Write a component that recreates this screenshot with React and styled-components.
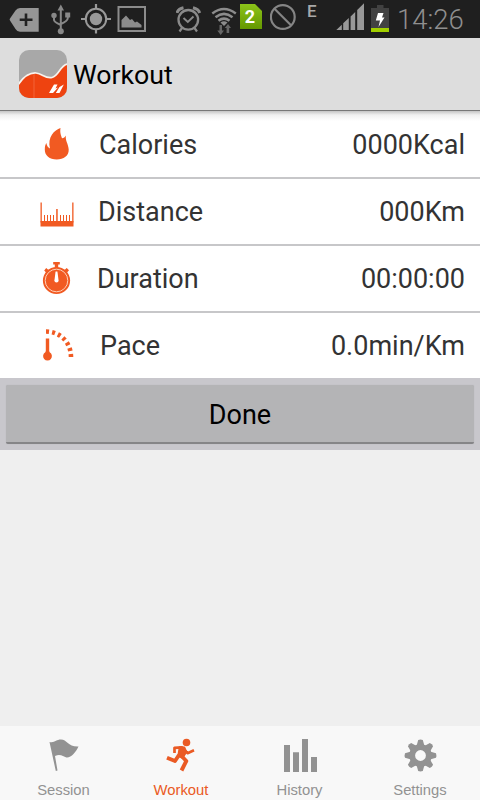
import React from 'react';
import styled, { createGlobalStyle } from 'styled-components';

const StatusBar = () => {
    return (
        <Status>
            <StatusIcon $w={30} $gap={9} viewBox="9 0 30 38">
                <path d="M20 8H38.7V31.7H20Q17 31.7 15.500 29L10 20.500Q9.200 19.500 10 18.500L15.500 10.500Q17 8 20 8Z" fill="#969696" />
                <path d="M26 13.500V26M19.700 19.700H32.500" stroke="#222" strokeWidth="2.600" />
            </StatusIcon>
            <StatusIcon $w={20} $gap={12} viewBox="51 0 20 38">
                <g fill="none" stroke="#888" strokeWidth="2">
                    <path d="M60.800 8V32M54 16V20Q54 22 60.800 25M67.800 15V18Q67.800 21 60.800 24" />
                </g>
                <g fill="#888">
                    <path d="M60.800 4.500L64 10.500H57.500Z" />
                    <circle cx="54" cy="15.500" r="2.700" />
                    <rect x="65.200" y="12.500" width="5" height="5" />
                    <circle cx="60.800" cy="31.300" r="3" />
                </g>
            </StatusIcon>
            <StatusIcon $w={30} $gap={10} viewBox="81 0 30 38">
                <circle cx="96" cy="19" r="10.200" fill="none" stroke="#999" strokeWidth="2" />
                <circle cx="96" cy="19" r="6.200" fill="#999" />
                <path d="M96 4V9M96 29V33.500M81 19H86M106 19H111" stroke="#999" strokeWidth="2.200" />
            </StatusIcon>
            <StatusIcon $w={30} $gap={6} viewBox="117 0 30 38">
                <rect x="118.500" y="7" width="26.500" height="24" fill="none" stroke="#8c8c8c" strokeWidth="2" />
                <path d="M121.500 27.500V20L126 15.500L130 20L132 19L135 22.500L137 21.500L141.500 25V27.500Z" fill="#8c8c8c" />
            </StatusIcon>
            <StatusIcon $w={26} $gap={29} viewBox="176 0 26 38">
                <g fill="none" stroke="#8a8a8a">
                    <circle cx="188.300" cy="19.800" r="9.800" strokeWidth="2.300" />
                    <path d="M183.500 18L187.800 22L193.500 16.500" strokeWidth="1.900" />
                    <path d="M177 13Q178 9 183.500 7.800M193 7.800Q198.500 9 199.700 13" strokeWidth="3" />
                    <path d="M182 28L179.500 31.500M194.500 28L197 31.500" strokeWidth="2.200" />
                </g>
            </StatusIcon>
            <StatusIcon $w={27} $gap={9} viewBox="211 0 27 38">
                <g fill="none" stroke="#8c8c8c" strokeWidth="2.500">
                    <path d="M212.300 13.500Q224 4.500 235.800 13.500" />
                    <path d="M215.500 17.200Q224 10.500 232.500 17.200" />
                    <path d="M218.500 20.800Q224 16.500 229.500 20.800" />
                </g>
                <path d="M220.500 22.500Q224 20 227.500 22.500L224 26Z" fill="#8c8c8c" />
                <g fill="#666">
                    <path d="M219.500 25H222V30.500H224L220.700 35L217.300 30.500H219.500Z" />
                    <path d="M226.600 33H229.200V28H231L228 24L224.800 28H226.600Z" />
                </g>
            </StatusIcon>
            <SimCard>2</SimCard>
            <StatusIcon $w={27} $gap={8} viewBox="270 0 27 38">
                <circle cx="282.800" cy="17" r="11.900" fill="none" stroke="#858585" strokeWidth="2.200" />
                <path d="M274.500 8.700L291 25.300" stroke="#858585" strokeWidth="2.200" />
            </StatusIcon>
            <NetworkType>E</NetworkType>
            <StatusIcon $w={28} $gap={19} viewBox="336 0 28 38">
                <path
                    d="M336.300 30L341.800 24.800V30ZM343.200 30V23.300L348.800 18V30ZM350.600 30V16.500L355.200 12V30ZM357.200 30V10L364 3.300V30Z"
                    fill="#989898"
                />
            </StatusIcon>
            <StatusIcon $w={18} $gap={7} viewBox="371 0 18 38">
                <path d="M377 5H383.500V8H389V28.500H371V8H377Z" fill="#424242" />
                <rect x="371" y="28" width="18" height="4" fill="#a2cf00" />
                <path d="M378 13L383.500 13L382 17.500L384.500 17.500L378.500 27L380 20.500L375.800 20.500Z" fill="#fff" />
            </StatusIcon>
            <Clock>14:26</Clock>
        </Status>
    )
};

const AppLogo = () => {
    return (
        <Logo viewBox="0 0 48 48">
            <clipPath id="tile">
                <rect width="48" height="48" rx="10" />
            </clipPath>
            <g clipPath="url(#tile)">
                <rect width="48" height="48" fill="#a8a8a8" />
                <path d="M-1 35C5 26 10 22.500 17 23C23.500 23.500 26 29 33 27.500C40 26 41 15 49 14V49H-1Z" fill="#ee4310" stroke="#f8f3ee" strokeWidth="1.700" />
                <path d="M15 24V48" stroke="#f36d45" strokeWidth=".8" />
                <path d="M35 34.500H38.500L36.500 38.500L39 37.500L34 43H30ZM40.500 37L44.800 34.500L40.500 43H36.800Z" fill="#fff" />
            </g>
        </Logo>
    )
};

const FlameIcon = () => {
    return (
        <StatIcon viewBox="0 0 36 36">
            <path
                d="M22.500 1C21.700 6 23.200 8.500 24 11.300C25.200 11.500 27.200 10 28 8.500C26.800 13 30.500 17 30.700 22.500C31 28.800 25.700 32.500 18.700 32.500C11.500 32.500 6.800 28.500 6.800 22.800C6.800 19 7.500 17.500 8.300 16C8.800 19 10.500 21 12 21.500C9 10 16.500 3 22.500 1Z"
                fill="#f15a22"
            />
        </StatIcon>
    )
};

const RulerIcon = () => {
    return (
        <StatIcon viewBox="0 1 36 36">
            <g fill="#f15a22">
                <rect x="2.500" y="28" width="33" height="5.500" />
                <rect x="2.500" y="9.500" width="1.300" height="20" />
                <rect x="34.200" y="9.500" width="1.300" height="20" />
                <rect x="18.200" y="16" width="1.500" height="13" />
                {[6, 9, 12, 15, 22, 25, 28, 31].map((x) => (
                    <rect key={x} x={x} y="22" width="1" height="7" />
                ))}
            </g>
        </StatIcon>
    )
};

const StopwatchIcon = () => {
    return (
        <StatIcon viewBox="0 1 36 36">
            <g fill="#f15a22">
                <circle cx="18.500" cy="20.500" r="13.600" />
                <path d="M15.200 2H21.800V4.500H20.200V8H16.800V4.500H15.200ZM6.200 10.500L8.200 8L11 10.500L8.500 13ZM26 10.500L28.700 8L31 10.300L28.700 13Z" />
            </g>
            <circle cx="18.500" cy="20.500" r="11.300" fill="none" stroke="#ffcfb7" strokeWidth="1" />
            <path d="M17.600 11.500H19.400L20.600 20.500A2.100 2.100 0 0 1 16.400 20.500Z" fill="#fff" />
        </StatIcon>
    )
};

const GaugeIcon = () => {
    return (
        <StatIcon viewBox="0 1 36 36">
            <path d="M8 4.500C21 4.500 33 14 33 30.500" fill="none" stroke="#f15a22" strokeWidth="4.600" strokeDasharray="3 3.150" />
            <path d="M7.800 11.500H11.200V24L11.700 25.300A4.400 4.400 0 1 1 7.300 25.300L7.800 24Z" fill="#f15a22" />
        </StatIcon>
    )
};

const FlagIcon = () => {
    return (
        <TabIcon viewBox="1 0 36 36">
            <path d="M4.500 3C10 4 11 .5 16 .5C22 .5 23 8 33.500 7.500C31 13 26 19 21.500 18.500C18 18 16 14.500 10 17L12.500 31.500L10.800 32Z" fill="#929292" />
        </TabIcon>
    )
};

const RunnerIcon = () => {
    return (
        <TabIcon viewBox="-1 0 36 36">
            <circle cx="22.500" cy="3.500" r="3.800" fill="#ea5a24" />
            <path d="M10.500 14V8.800L18 8.300L23.500 14.200L30 11.300" fill="none" stroke="#ea5a24" strokeWidth="2.700" strokeLinejoin="round" />
            <path d="M15.500 8L20.500 8.200L22.500 13L18.500 19L14 17Z" fill="#ea5a24" stroke="#ea5a24" strokeWidth="1.500" strokeLinejoin="round" />
            <path d="M15 16L11 22L3 18.700M18 17.500L22.300 22L17.500 31.500" fill="none" stroke="#ea5a24" strokeWidth="3.900" strokeLinejoin="round" />
        </TabIcon>
    )
};

const BarsIcon = () => {
    return (
        <TabIcon viewBox="0 0 36 36">
            <path d="M2 6H8V33H2ZM11 13.300H17V33H11ZM20 0H26V33H20ZM29 18H35V33H29Z" fill="#929292" />
        </TabIcon>
    )
};

const GearIcon = () => {
    return (
        <TabIcon viewBox="0 0 36 36">
            <circle cx="18.500" cy="16.500" r="8.300" fill="none" stroke="#929292" strokeWidth="5.800" />
            {[0, 45, 90, 135, 180, 225, 270, 315].map((angle) => (
                <path
                    key={angle}
                    d="M14.500 7L16.200 1Q18.500 .2 20.800 1L22.500 7Z"
                    fill="#929292"
                    transform={`rotate(${angle} 18.500 16.500)`}
                />
            ))}
        </TabIcon>
    )
};

const stats = [
    { label: 'Calories', value: '0000Kcal', icon: FlameIcon, gap: 25 },
    { label: 'Distance', value: '000Km', icon: RulerIcon, gap: 24 },
    { label: 'Duration', value: '00:00:00', icon: StopwatchIcon, gap: 23 },
    { label: 'Pace', value: '0.0min/Km', icon: GaugeIcon, gap: 26 },
]

const tabs = [
    { label: 'Session', icon: FlagIcon, width: 127 },
    { label: 'Workout', icon: RunnerIcon, width: 108, active: true },
    { label: 'History', icon: BarsIcon, width: 129 },
    { label: 'Settings', icon: GearIcon, width: 112 },
]

const App = () => {
    return (
        <Screen>
            <GlobalStyle />
            <StatusBar />
            <ActionBar>
                <AppLogo />
                <Title>Workout</Title>
            </ActionBar>
            <StatList>
                {stats.map(({ label, value, icon: Icon, gap }) => (
                    <StatRow key={label}>
                        <Icon />
                        <StatLabel $gap={gap}>{label}</StatLabel>
                        <StatValue>{value}</StatValue>
                    </StatRow>
                ))}
            </StatList>
            <ButtonWrap>
                <DoneButton>Done</DoneButton>
            </ButtonWrap>
            <TabBar>
                {tabs.map(({ label, icon: Icon, width, active }) => (
                    <Tab key={label} $width={width} $active={active}>
                        <Icon />
                        <TabLabel>{label}</TabLabel>
                    </Tab>
                ))}
            </TabBar>
        </Screen>
    )
};

export default App;


const GlobalStyle = createGlobalStyle`
    body {
        margin: 0;
        background: #efefef;
    }

    * {
        box-sizing: border-box;
    }
`

const Screen = styled.div`
    display: flex;
    flex-direction: column;
    width: 480px;
    height: 800px;
    overflow: hidden;
    background: #efefef;
    font-family: Roboto, "Liberation Sans", sans-serif;
`

const Status = styled.header`
    display: flex;
    flex: none;
    height: 38px;
    background: #1f1f1f;
`

const StatusIcon = styled.svg`
    flex: none;
    width: ${({ $w }) => $w}px;
    height: 38px;
    margin-left: ${({ $gap }) => $gap}px;
`

const SimCard = styled.span`
    width: 22px;
    height: 25px;
    margin: 4px 0 0 2px;
    background: linear-gradient(#8cc41a, #659800);
    clip-path: polygon(0 0, 15px 0, 100% 7px, 100% 100%, 0 100%);
    color: #fff;
    font-size: 18px;
    font-weight: 700;
    line-height: 26px;
    text-align: center;
    padding-right: 2px;
`

const NetworkType = styled.span`
    width: 10px;
    margin-left: 10px;
    padding-top: 2px;
    color: #a8a8a8;
    font-size: 17px;
    font-weight: 500;
    line-height: 19px;
`

const Clock = styled.time`
    margin-left: 8px;
    color: #8f8f8f;
    font-size: 27.5px;
    font-weight: 300;
    line-height: 39px;
`

const ActionBar = styled.div`
    display: flex;
    align-items: center;
    flex: none;
    height: 73px;
    padding-left: 19px;
    background: #ddd;
    border-bottom: 1px solid #777;
`

const Logo = styled.svg`
    width: 48px;
    height: 48px;
`

const Title = styled.h1`
    margin: 2px 0 0 6px;
    color: #000;
    font-size: 26.7px;
    font-weight: 400;
    line-height: 32px;
`

const StatList = styled.div`
    flex: none;
    height: 267px;
    background: linear-gradient(#c4c4c4, #f0f0f0 4px, #fff 10px);
`

const StatRow = styled.div`
    display: flex;
    align-items: center;
    height: 67px;
    padding: 0 15px 0 38px;
    border-bottom: 2px solid #c7c7c9;
    color: #333;
    font-size: 27px;
    line-height: 32px;

    &:first-child {
        height: 68px;
        padding-top: 2px;
    }

    &:last-child {
        height: 65px;
        border-bottom: 0;
    }
`

const StatIcon = styled.svg`
    flex: none;
    width: 36px;
    height: 36px;
`

const StatLabel = styled.span`
    flex: 1;
    margin-left: ${({ $gap }) => $gap}px;
`

const StatValue = styled.span`
    text-align: right;
`

const ButtonWrap = styled.div`
    flex: none;
    height: 72px;
    padding: 7px 6px 6px;
    background: #c8c7cc;
`

const DoneButton = styled.button`
    display: block;
    width: 100%;
    height: 59px;
    padding: 2px 0 0;
    border: 0;
    border-bottom: 2px solid #858587;
    border-radius: 2px;
    background: #b4b4b6;
    box-shadow: 0 0 1px #a9a9ad;
    color: #000;
    font-family: inherit;
    font-size: 27px;
`

const TabBar = styled.nav`
    display: flex;
    flex: none;
    height: 74px;
    margin-top: auto;
    padding-right: 4px;
    background: #f8f8f8;
`

const Tab = styled.a`
    display: flex;
    flex-direction: column;
    align-items: center;
    width: ${({ $width }) => $width}px;
    padding-top: 13px;
    color: ${({ $active }) => ($active ? '#ea5a24' : '#929292')};
`

const TabIcon = styled.svg`
    width: 36px;
    height: 36px;
    overflow: visible;
`

const TabLabel = styled.span`
    margin-top: 6px;
    font-family: "Liberation Sans", Arial, sans-serif;
    font-size: 14.8px;
    line-height: 18px;
`
